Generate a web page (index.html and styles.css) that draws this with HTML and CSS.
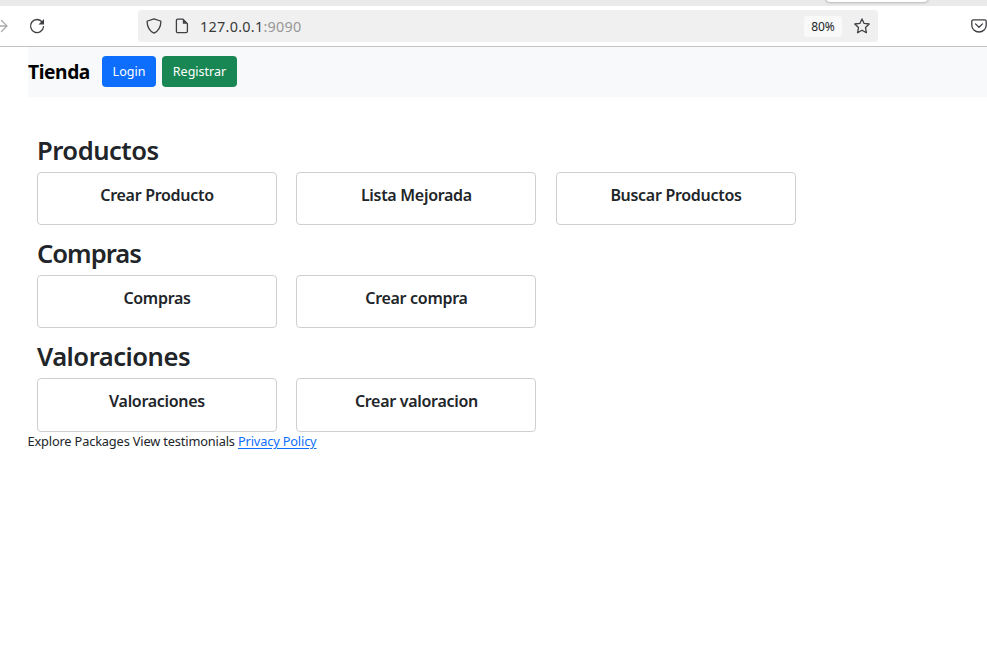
FILE: index.html
```html
<!DOCTYPE html>
<html lang="es">
<head>
<meta charset="utf-8">
<title>Tienda</title>
<link rel="stylesheet" href="styles.css">
</head>
<body>
<div class="tabstrip"><div class="tab"></div></div>
<div class="toolbar">
  <svg class="icon forward" width="16" height="16" viewBox="0 0 16 16"><path d="M0 8h15M9.500 2.500 15 8l-5.500 5.500"/></svg>
  <svg class="icon reload" width="16" height="16" viewBox="0 0 16 16"><path d="M13.300 4.200A6.500 6.500 0 1 0 14.500 8.700"/><path class="solid" d="M15 1v5.500H9.500z"/></svg>
  <div class="urlbar">
    <svg class="icon shield" width="16" height="16" viewBox="0 0 16 16"><path d="M8 .8 14.400 3c.4.100.5.400.5.700C14.700 9 12.500 13 8 15.200 3.500 13 1.300 9 1.100 3.700c0-.3.100-.6.500-.7z"/></svg>
    <svg class="icon page" width="16" height="16" viewBox="0 0 16 16"><path d="M3.700 1.200H9l4.400 4.400v7.700a1.300 1.300 0 0 1-1.300 1.300H3.700a1.300 1.300 0 0 1-1.300-1.300V2.500a1.300 1.300 0 0 1 1.300-1.300z"/><path class="solid" d="M8.800 1.200v4.600h4.600z"/></svg>
    <span class="address">127.0.0.1<span class="port">:9090</span></span>
    <span class="zoom">80%</span>
    <svg class="icon star" width="16" height="16" viewBox="0 0 16 16"><path d="m8 .9 2.100 4.500 5.100.6-3.700 3.500.9 5.200L8 12.200l-4.400 2.500.9-5.200L.8 6l5.100-.6z"/></svg>
  </div>
  <svg class="icon pocket" width="16" height="16" viewBox="0 0 16 16"><path d="M2.300 1.900h11.400c.8 0 1.500.6 1.500 1.400v3.900a7.200 6.800 0 0 1-14.400 0V3.300c0-.8.700-1.400 1.500-1.400z"/><path d="m4.500 5.900 3.500 3.300 3.500-3.300"/></svg>
</div>
<div class="page-body">
  <nav class="navbar">
    <a class="brand">Tienda</a>
    <button class="btn login">Login</button>
    <button class="btn register">Registrar</button>
  </nav>
  <main>
    <section>
      <h2>Productos</h2>
      <div class="cards">
        <div class="card"><h5>Crear Producto</h5></div>
        <div class="card"><h5>Lista Mejorada</h5></div>
        <div class="card"><h5>Buscar Productos</h5></div>
      </div>
    </section>
    <section>
      <h2 class="snug">Compras</h2>
      <div class="cards">
        <div class="card"><h5>Compras</h5></div>
        <div class="card"><h5>Crear compra</h5></div>
      </div>
    </section>
    <section>
      <h2>Valoraciones</h2>
      <div class="cards tall">
        <div class="card"><h5>Valoraciones</h5></div>
        <div class="card"><h5>Crear valoracion</h5></div>
      </div>
    </section>
  </main>
  <footer>Explore Packages View testimonials <a href="#">Privacy Policy</a></footer>
</div>
</body>
</html>
```
FILE: styles.css
```css
* { box-sizing: border-box; }
body {
  margin: 0;
  background: #fff;
  color: #212529;
  font-family: "Noto Sans", sans-serif;
  font-size: 12.8px;
  height: 667px;
  overflow: hidden;
}
.tabstrip { height: 6px; background: #eaeaea; overflow: hidden; }
.tab {
  width: 102px;
  height: 12px;
  margin: -10px 0 0 826px;
  background: #fff;
  border-radius: 4px;
  box-shadow: 0 0 3px rgba(0, 0, 0, .45);
}
.toolbar {
  height: 41px;
  display: flex;
  align-items: flex-start;
  padding-top: 4px;
  border-bottom: 1px solid #c2c2c2;
}
.icon {
  flex: none;
  fill: none;
  stroke: #3f3f43;
  stroke-width: 1.3;
  stroke-linejoin: round;
  stroke-linecap: round;
}
.icon .solid { fill: #3f3f43; stroke: none; }
.forward { margin: 8px 0 0 -8px; stroke: #ababab; }
.reload { margin: 8px 0 0 21px; }
.urlbar {
  width: 740px;
  height: 32px;
  margin-left: 93px;
  display: flex;
  align-items: center;
  padding: 0 8px;
  background: #f0f0f0;
  border-radius: 4px;
}
.page { margin-left: 12px; }
.address {
  margin-left: 10px;
  color: #3a3a3a;
  font-size: 14.4px;
  line-height: 20px;
  padding-top: 1px;
  letter-spacing: .27px;
}
.port { color: #979797; }
.zoom {
  margin-left: auto;
  width: 38px;
  height: 21px;
  line-height: 22px;
  text-align: center;
  font-size: 12px;
  background: #f9f9f9;
  border-radius: 3px;
}
.star { margin-left: 12px; }
.pocket { margin: 8px 0 0 93px; }
.page-body { margin-left: 28px; }
.navbar {
  height: 50px;
  padding-bottom: 1px;
  display: flex;
  align-items: center;
  background: #f7f9fb;
}
.brand {
  width: 74px;
  color: #000;
  font-size: 19.2px;
  font-weight: 700;
  line-height: 30px;
  letter-spacing: -.4px;
}
.btn {
  height: 31px;
  padding: 0;
  border: 0;
  border-radius: 4px;
  color: #fff;
  font: 12.5px/31px "Noto Sans", sans-serif;
}
.login { width: 54px; background: #0d6efd; }
.register { width: 75px; margin-left: 6px; background: #198754; }
main { padding: 38px 0 0 9px; }
h2 {
  margin: 0;
  height: 37px;
  font-size: 25.6px;
  font-weight: 560;
  line-height: 32px;
  letter-spacing: -.5px;
}
.snug { letter-spacing: -1px; }
.cards { display: flex; gap: 19.400px; height: 53px; margin-bottom: 13px; }
.tall { height: 54px; margin-bottom: 0; }
.card {
  width: 240px;
  padding-top: 13px;
  border: 1px solid #cfcfcf;
  border-radius: 4px;
  text-align: center;
}
.card:nth-child(3) { margin-left: .2px; }
h5 {
  margin: 0;
  font-size: 16px;
  font-weight: 560;
  line-height: 19px;
  letter-spacing: -.3px;
}
footer { margin-left: -.5px; line-height: 19px; letter-spacing: -.16px; }
footer a { color: #0d6efd; text-underline-offset: 2px; }
```
